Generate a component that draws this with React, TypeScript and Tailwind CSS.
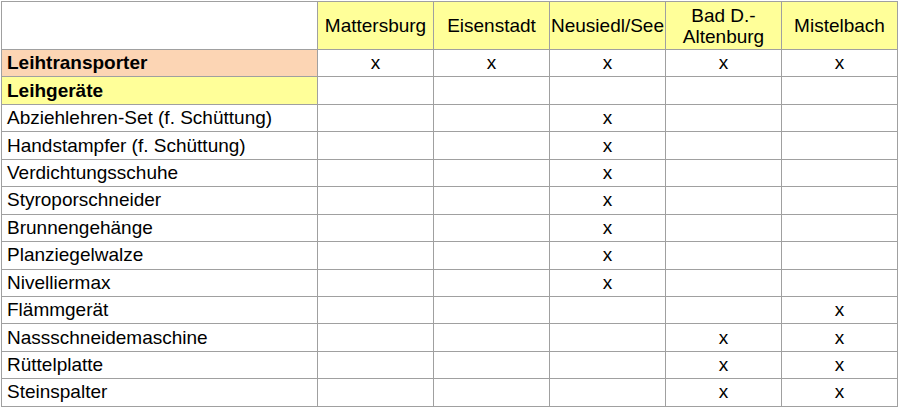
import { FC } from "react";

const places = ["Mattersburg", "Eisenstadt", "Neusiedl/See", "Bad D.-\nAltenburg", "Mistelbach"];

interface Row {
  name: string;
  marks: boolean[];
  bold?: boolean;
  bg?: string;
}

const rows: Row[] = [
  { name: "Leihtransporter", marks: [true, true, true, true, true], bold: true, bg: "bg-[#fcd5b4]" },
  { name: "Leihgeräte", marks: [false, false, false, false, false], bold: true, bg: "bg-[#ffff99]" },
  { name: "Abziehlehren-Set (f. Schüttung)", marks: [false, false, true, false, false] },
  { name: "Handstampfer (f. Schüttung)", marks: [false, false, true, false, false] },
  { name: "Verdichtungsschuhe", marks: [false, false, true, false, false] },
  { name: "Styroporschneider", marks: [false, false, true, false, false] },
  { name: "Brunnengehänge", marks: [false, false, true, false, false] },
  { name: "Planziegelwalze", marks: [false, false, true, false, false] },
  { name: "Nivelliermax", marks: [false, false, true, false, false] },
  { name: "Flämmgerät", marks: [false, false, false, false, true] },
  { name: "Nassschneidemaschine", marks: [false, false, false, true, true] },
  { name: "Rüttelplatte", marks: [false, false, false, true, true] },
  { name: "Steinspalter", marks: [false, false, false, true, true] },
];

const App: FC = () => {
  return (
    <div className="w-[900px] h-[409px] bg-white pt-px pl-px font-['Liberation_Sans',Arial,sans-serif] text-[19px] text-black">
      <table className="border-collapse table-fixed w-[896px]">
        <colgroup>
          <col className="w-[316px]" />
          <col className="w-[116px]" />
          <col className="w-[116px]" />
          <col className="w-[116px]" />
          <col className="w-[116px]" />
          <col className="w-[116px]" />
        </colgroup>
        <thead>
          <tr className="h-[48px]">
            <th className="border border-[#a0a0a0] bg-white"></th>
            {places.map((p) => (
              <th
                key={p}
                className="border border-[#a0a0a0] bg-[#ffff99] font-normal text-center leading-[21px] whitespace-pre-line px-0 overflow-hidden"
              >
                {p}
              </th>
            ))}
          </tr>
        </thead>
        <tbody>
          {rows.map((r) => (
            <tr key={r.name} className="h-[27.45px]">
              <td
                className={`border border-[#a0a0a0] pl-[5px] leading-none pb-[1px] whitespace-nowrap ${r.bold ? "font-bold" : ""} ${r.bg ?? ""}`}
              >
                {r.name}
              </td>
              {r.marks.map((m, i) => (
                <td key={i} className="border border-[#a0a0a0] text-center leading-none pb-[1px]">
                  {m ? "x" : ""}
                </td>
              ))}
            </tr>
          ))}
        </tbody>
      </table>
    </div>
  );
};

export default App;
